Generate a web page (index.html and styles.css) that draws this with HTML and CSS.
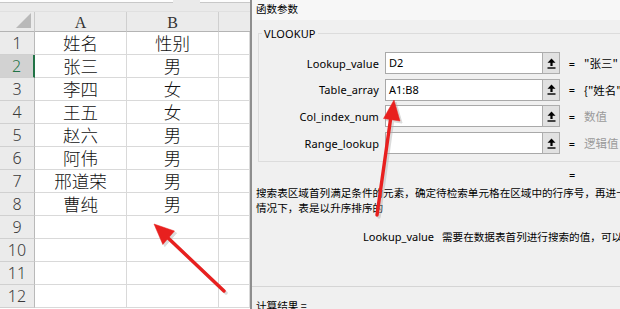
FILE: index.html
```html
<!DOCTYPE html>
<html>
<head>
<meta charset="utf-8">
<link rel="stylesheet" href="styles.css">
</head>
<body>
<div class="page">
  <div class="sheet">
    <div class="topband"><div class="fbar"></div><div class="fbar fbar2"></div></div>
    <div class="grid">
      <div class="hd corner"><span class="tri"></span></div>
      <div class="hd colh">A</div>
      <div class="hd colh">B</div>
      <div class="hd colh last"></div>

      <div class="hd rowh">1</div><div class="cell">姓名</div><div class="cell">性别</div><div class="cell"></div>
      <div class="hd rowh active">2</div><div class="cell">张三</div><div class="cell">男</div><div class="cell"></div>
      <div class="hd rowh">3</div><div class="cell">李四</div><div class="cell">女</div><div class="cell"></div>
      <div class="hd rowh">4</div><div class="cell">王五</div><div class="cell">女</div><div class="cell"></div>
      <div class="hd rowh">5</div><div class="cell">赵六</div><div class="cell">男</div><div class="cell"></div>
      <div class="hd rowh">6</div><div class="cell">阿伟</div><div class="cell">男</div><div class="cell"></div>
      <div class="hd rowh">7</div><div class="cell">邢道荣</div><div class="cell">男</div><div class="cell"></div>
      <div class="hd rowh">8</div><div class="cell">曹纯</div><div class="cell">男</div><div class="cell"></div>
      <div class="hd rowh">9</div><div class="cell"></div><div class="cell"></div><div class="cell"></div>
      <div class="hd rowh">10</div><div class="cell"></div><div class="cell"></div><div class="cell"></div>
      <div class="hd rowh">11</div><div class="cell"></div><div class="cell"></div><div class="cell"></div>
      <div class="hd rowh">12</div><div class="cell"></div><div class="cell"></div><div class="cell"></div>
    </div>
  </div>
  <div class="dialog">
    <div class="titlebar">函数参数</div>
    <div class="group">
      <div class="legend">VLOOKUP</div>
      <div class="args">
        <div class="lbl">Lookup_value</div>
        <div class="inp">D2</div>
        <div class="btn"><svg width="9" height="11" viewBox="0 0 9 11"><path d="M4.5 0.5 L8.5 4.8 L5.6 4.8 L5.6 8 L3.4 8 L3.4 4.8 L0.5 4.8 Z" fill="#000"/><rect x="0.5" y="9.3" width="8" height="1.4" fill="#000"/></svg></div>
        <div class="eq">=</div>
        <div class="val">"张三"</div>

        <div class="lbl">Table_array</div>
        <div class="inp">A1:B8</div>
        <div class="btn"><svg width="9" height="11" viewBox="0 0 9 11"><path d="M4.5 0.5 L8.5 4.8 L5.6 4.8 L5.6 8 L3.4 8 L3.4 4.8 L0.5 4.8 Z" fill="#000"/><rect x="0.5" y="9.3" width="8" height="1.4" fill="#000"/></svg></div>
        <div class="eq">=</div>
        <div class="val">{"姓名",</div>

        <div class="lbl">Col_index_num</div>
        <div class="inp"></div>
        <div class="btn"><svg width="9" height="11" viewBox="0 0 9 11"><path d="M4.5 0.5 L8.5 4.8 L5.6 4.8 L5.6 8 L3.4 8 L3.4 4.8 L0.5 4.8 Z" fill="#000"/><rect x="0.5" y="9.3" width="8" height="1.4" fill="#000"/></svg></div>
        <div class="eq">=</div>
        <div class="val gray">数值</div>

        <div class="lbl">Range_lookup</div>
        <div class="inp"></div>
        <div class="btn"><svg width="9" height="11" viewBox="0 0 9 11"><path d="M4.5 0.5 L8.5 4.8 L5.6 4.8 L5.6 8 L3.4 8 L3.4 4.8 L0.5 4.8 Z" fill="#000"/><rect x="0.5" y="9.3" width="8" height="1.4" fill="#000"/></svg></div>
        <div class="eq">=</div>
        <div class="val gray">逻辑值</div>
      </div>
    </div>
    <div class="result-eq">=</div>
    <div class="desc">搜索表区域首列满足条件的元素，确定待检索单元格在区域中的行序号，再进一<br>情况下，表是以升序排序的</div>
    <div class="argdesc"><span class="argname">Lookup_value</span><span class="argtext">需要在数据表首列进行搜索的值，可以</span></div>
    <div class="sep"></div>
    <div class="calc">计算结果 =</div>
  </div>
  <svg class="arrows" width="620" height="309" viewBox="0 0 620 309">
    <g fill="#b0b0b0" stroke="#b0b0b0" opacity="0.45" transform="translate(2,2)">
      <line x1="224" y1="291" x2="166" y2="236" stroke-width="3.4" stroke-linecap="round"/>
      <polygon points="154,224 174.5,231 162.8,244.5"/>
      <line x1="377" y1="215" x2="391" y2="116" stroke-width="3.4" stroke-linecap="round"/>
      <polygon points="394,100 400,121 383.5,118.5"/>
    </g>
    <g fill="#e8201f" stroke="#e8201f">
      <line x1="224" y1="291" x2="166" y2="236" stroke-width="3.4" stroke-linecap="round"/>
      <polygon points="154,224 174.5,231 162.8,244.5" stroke-width="0.5"/>
      <line x1="377" y1="215" x2="391" y2="116" stroke-width="3.4" stroke-linecap="round"/>
      <polygon points="394,100 400,121 383.5,118.5" stroke-width="0.5"/>
    </g>
  </svg>
</div>
</body>
</html>
```

FILE: styles.css
```css
* { box-sizing: border-box; }
html, body { margin: 0; padding: 0; }
body { width: 620px; height: 309px; overflow: hidden; background: #fff; }

.page {
  position: relative;
  display: flex;
  width: 620px;
  height: 309px;
  overflow: hidden;
}

/* ---------- spreadsheet ---------- */
.sheet {
  width: 250px;
  flex: none;
  background: #fff;
  overflow: hidden;
}
.topband {
  height: 12px;
  background: #eaeaea;
  display: flex;
  gap: 27px;
  border-bottom: 1px solid #e0e0e0;
}
.fbar {
  width: 173px;
  height: 3px;
  background: #fdfdfd;
  border-bottom: 1px solid #c8c8c8;
}
.fbar2 { width: 50px; }

.grid {
  display: grid;
  grid-template-columns: 35px 92px 92px 31px;
  grid-template-rows: 20px repeat(12, 23px);
}
.hd {
  background: #ebebeb;
  color: #333;
  display: flex;
  align-items: center;
  justify-content: center;
}
.corner {
  position: relative;
  border-right: 1px solid #c9c9c9;
  border-bottom: 1px solid #b4b4b4;
}
.tri {
  position: absolute;
  right: 3px;
  bottom: 3px;
  width: 0;
  height: 0;
  border-left: 15px solid transparent;
  border-bottom: 15px solid #b9b9b9;
}
.colh {
  font-family: "Liberation Serif", serif;
  font-size: 16px;
  border-right: 1px solid #cfcfcf;
  border-bottom: 1px solid #b4b4b4;
  padding-top: 2px;
}
.colh.last { border-right: none; }
.rowh {
  font-family: "Noto Sans", "Liberation Sans", sans-serif;
  font-weight: 300;
  font-size: 16px;
  color: #3a3a3a;
  border-right: 1px solid #b9b9b9;
  border-bottom: 1px solid #d0d0d0;
}
.rowh.active {
  background: #d2d2d2;
  color: #217346;
  border-right: 2px solid #217346;
}
.cell {
  font-family: "Noto Sans CJK SC", sans-serif;
  font-weight: 300;
  font-size: 17.5px;
  color: #111;
  border-right: 1px solid #d9d9d9;
  border-bottom: 1px solid #d9d9d9;
  display: flex;
  align-items: center;
  justify-content: center;
  line-height: 1;
}

/* ---------- dialog ---------- */
.dialog {
  flex: 1;
  background: #f0f0f0;
  border-left: 2px solid #8e8e8e;
  font-family: "Noto Sans", "Noto Sans CJK SC", sans-serif;
  font-size: 11px;
  color: #000;
  white-space: nowrap;
  overflow: hidden;
  min-width: 0;
}
.titlebar {
  height: 20px;
  background: #f7f7f7;
  padding-left: 4px;
  font-family: "Noto Sans CJK SC", sans-serif;
  font-size: 10.5px;
  line-height: 18px;
}
.group {
  position: relative;
  margin: 13px 0 0 6px;
  width: 420px;
  height: 129px;
  border: 1px solid #dcdcdc;
  border-right: none;
  padding-top: 18px;
}
.legend {
  position: absolute;
  top: -8px;
  left: 3px;
  padding: 0 2px;
  background: #f0f0f0;
  font-size: 11px;
  line-height: 15px;
  letter-spacing: 0.1px;
}
.args {
  display: grid;
  grid-template-columns: 120px 163px 18px 24px auto;
  grid-auto-rows: 22px;
  row-gap: 4.7px;
  align-items: center;
}
.lbl {
  text-align: right;
  font-size: 11px;
  letter-spacing: 0.1px;
}
.inp {
  margin-left: 6px;
  height: 22px;
  background: #fff;
  border: 1px solid #a9a9a9;
  border-right: none;
  padding-left: 3px;
  line-height: 20px;
  font-size: 11px;
}
.btn {
  height: 22px;
  background: #e1e1e1;
  border: 1px solid #adadad;
  display: flex;
  align-items: center;
  justify-content: center;
}
.eq {
  text-align: center;
}
.val {
  font-family: "Noto Sans CJK SC", sans-serif;
  font-size: 11.5px;
}
.val.gray { color: #9a9a9a; }

.result-eq {
  height: 14px;
  margin-top: 6px;
  padding-left: 317px;
  line-height: 14px;
}
.desc {
  margin-top: 3px;
  padding-left: 4px;
  font-family: "Noto Sans CJK SC", sans-serif;
  font-size: 10.6px;
  line-height: 15px;
}
.argdesc {
  margin-top: 14px;
  display: flex;
  padding-left: 111px;
  font-family: "Noto Sans", "Noto Sans CJK SC", sans-serif;
  font-size: 11px;
  line-height: 15px;
}
.argname { flex: none; width: 79px; }
.argtext { font-family: "Noto Sans CJK SC", sans-serif; font-size: 10.6px; }
.sep {
  margin: 42px 0 0 0;
  height: 1px;
  background: #d5d5d5;
}
.calc {
  margin-top: 11px;
  padding-left: 4px;
  font-family: "Noto Sans CJK SC", sans-serif;
  font-size: 10.6px;
  line-height: 15px;
}

.arrows {
  position: absolute;
  left: 0;
  top: 0;
  pointer-events: none;
}
```
